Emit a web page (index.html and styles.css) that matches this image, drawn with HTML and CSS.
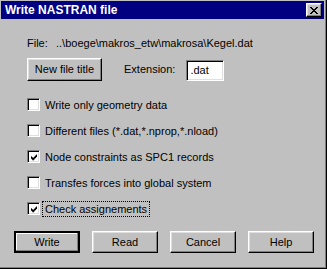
FILE: index.html
```html
<!DOCTYPE html>
<html lang="en">
  <head>
    <meta charset="UTF-8" />
    <title>Write NASTRAN file</title>
    <link rel="stylesheet" href="styles.css">
  </head>
  <body>
    <div class="window">
      <div class="titlebar">
        <span class="title">Write NASTRAN file</span>
        <div class="close-btn">
          <svg width="8" height="7" viewBox="0 0 8 7">
            <path d="M0 0h2v1h1v1h2v-1h1v-1h2v1h-1v1h-1v1h-1v1h1v1h1v1h1v1h-2v-1h-1v-1h-2v1h-1v1h-2v-1h1v-1h1v-1h1v-1h-1v-1h-1v-1h-1z" fill="#000"/>
          </svg>
        </div>
      </div>

      <div class="content">
        <div class="file-row">
          <span class="file-label">File:</span>
          <span>..\boege\makros_etw\makrosa\Kegel.dat</span>
        </div>

        <div class="name-row">
          <div class="btn btn-title">New file title</div>
          <span class="ext-label">Extension:</span>
          <div class="edit">.dat</div>
        </div>

        <div class="options">
          <label class="option"><span class="check"></span>Write only geometry data</label>
          <label class="option"><span class="check"></span>Different files (*.dat,*.nprop,*.nload)</label>
          <label class="option">
            <span class="check">
              <svg width="7" height="7" viewBox="0 0 7 7"><path d="M0 2h1v1h1v1h1v-1h1v-1h1v-1h1v-1h1v3h-1v1h-1v1h-1v1h-1v1h-1v-1h-1v-1h-1z" fill="#000"/></svg>
            </span>Node constraints as SPC1 records
          </label>
          <label class="option"><span class="check"></span>Transfes forces into global system</label>
          <label class="option">
            <span class="check">
              <svg width="7" height="7" viewBox="0 0 7 7"><path d="M0 2h1v1h1v1h1v-1h1v-1h1v-1h1v-1h1v3h-1v1h-1v1h-1v1h-1v1h-1v-1h-1v-1h-1z" fill="#000"/></svg>
            </span><span class="focus">Check assignements</span>
          </label>
        </div>
      </div>

      <div class="actions">
        <div class="btn btn-default">Write</div>
        <div class="btn">Read</div>
        <div class="btn">Cancel</div>
        <div class="btn">Help</div>
      </div>
    </div>
  </body>
</html>
```

FILE: styles.css
```css
body {
  margin: 0;
  font-family: "Liberation Sans", Arial, sans-serif;
  font-size: 11px;
  color: #000;
  background: #c0c0c0;
}

.window {
  box-sizing: border-box;
  width: 327px;
  height: 269px;
  background: #c0c0c0;
  border-right: 1px solid #000;
  border-bottom: 1px solid #000;
  box-shadow: inset -1px -1px #808080;
  padding: 1px 2px 2px 1px;
}

.titlebar {
  height: 18px;
  background: #000080;
  color: #fff;
  display: flex;
  align-items: center;
  justify-content: space-between;
  padding: 0 2px 0 4px;
}

.title {
  font-weight: bold;
  font-size: 12px;
}

.close-btn {
  box-sizing: border-box;
  width: 16px;
  height: 14px;
  background: #c0c0c0;
  border: 1px solid;
  border-color: #fff #000 #000 #fff;
  box-shadow: inset -1px -1px #808080, inset 1px 1px #dfdfdf;
  display: flex;
  align-items: center;
  justify-content: center;
}

.content {
  padding-left: 26px;
}

.file-row {
  margin-top: 18px;
  line-height: 13px;
  display: flex;
}

.file-label {
  width: 29px;
}

.name-row {
  margin-top: 7px;
  display: flex;
  align-items: center;
}

.btn {
  box-sizing: border-box;
  width: 66px;
  height: 22px;
  background: #c0c0c0;
  border: 1px solid;
  border-color: #fff #000 #000 #fff;
  box-shadow: inset -1px -1px #808080, inset 1px 1px #dfdfdf;
  display: flex;
  align-items: center;
  justify-content: center;
}

.btn-title {
  width: 75px;
  height: 23px;
}

.btn-default {
  border: 2px solid #000;
  box-shadow: inset -1px -1px #808080, inset 1px 1px #fff;
}

.ext-label {
  margin-left: 22px;
}

.edit {
  box-sizing: border-box;
  width: 38px;
  height: 21px;
  margin-left: 11px;
  margin-top: 3px;
  background: #fff;
  border: 1px solid;
  border-color: #808080 #fff #fff #808080;
  box-shadow: inset 1px 1px #000, inset -1px -1px #dfdfdf;
  padding: 3px 0 0 3px;
}

.options {
  margin-top: 17px;
  display: flex;
  flex-direction: column;
  gap: 13px;
}

.option {
  display: flex;
  align-items: center;
  height: 13px;
}

.check {
  box-sizing: border-box;
  width: 13px;
  height: 13px;
  margin-right: 5px;
  padding: 2px;
  background: #fff;
  border: 1px solid;
  border-color: #808080 #fff #fff #808080;
  box-shadow: inset 1px 1px #000, inset -1px -1px #dfdfdf;
  display: flex;
}

.check svg {
  margin: 1px 0 0 1px;
}

.focus {
  outline: 1px dotted #000;
  outline-offset: 1px;
  padding: 0 1px;
  margin-left: -1px;
}

.actions {
  margin-top: 16px;
  padding-left: 13px;
  display: flex;
  gap: 12px;
}
```
